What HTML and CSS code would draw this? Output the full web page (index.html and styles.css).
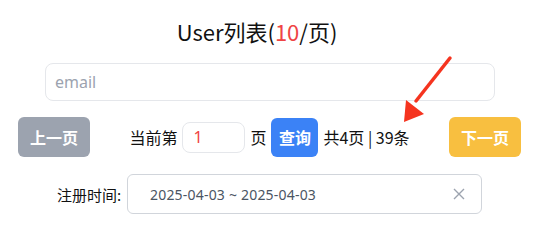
FILE: index.html
```html
<!DOCTYPE html>
<html lang="zh-CN">
<head>
    <meta charset="UTF-8">
    <meta name="viewport" content="width=device-width, initial-scale=1.0">
    <title>User列表</title>
    <link rel="stylesheet" href="styles.css">
</head>
<body>
    <div class="page">
        <h1 class="title">User列表(<span class="red">10</span>/页)</h1>

        <div class="search-row">
            <input class="email" type="text" placeholder="email">
        </div>

        <div class="pager">
            <button class="btn btn-prev">上一页</button>
            <div class="pager-mid">
                <span>当前第</span>
                <input class="page-input" type="text" value="1">
                <span>页</span>
                <button class="btn btn-query">查询</button>
                <span>共4页 | 39条</span>
            </div>
            <button class="btn btn-next">下一页</button>
        </div>

        <div class="date-row">
            <label class="date-label">注册时间:</label>
            <div class="date-box">
                <span class="date-text">2025-04-03 ~ 2025-04-03</span>
                <svg class="clear" width="14" height="14" viewBox="0 0 14 14">
                    <path d="M2 2 L12 12 M12 2 L2 12" stroke="#9ca3af" stroke-width="1.4" fill="none"/>
                </svg>
            </div>
        </div>

        <svg class="arrow" width="60" height="72" viewBox="0 0 60 72">
            <path d="M52 4 L18 47" stroke="#f5341f" stroke-width="3.5" stroke-linecap="round" fill="none"/>
            <polygon points="6,68 8,46 26,60" fill="#f5341f"/>
        </svg>
    </div>
</body>
</html>
```

FILE: styles.css
```css
* {
    margin: 0;
    padding: 0;
    box-sizing: border-box;
}

body {
    font-family: "Noto Sans", "Noto Sans CJK SC", sans-serif;
    background: #ffffff;
    color: #111111;
    width: 546px;
    height: 234px;
    overflow: hidden;
}

.page {
    position: relative;
    padding-top: 16px;
}

.title {
    font-family: "Noto Sans CJK SC", sans-serif;
    font-size: 22px;
    font-weight: 400;
    text-align: center;
    line-height: 30px;
    color: #111;
    padding-right: 32px;
}

.red {
    color: #ef4444;
}

.search-row {
    margin-top: 17px;
    padding-left: 45px;
}

.email {
    width: 450px;
    height: 38px;
    border: 1px solid #e5e7eb;
    border-radius: 8px;
    padding: 0 9px;
    font-family: "Noto Sans", sans-serif;
    font-size: 16px;
    outline: none;
}

.email::placeholder {
    color: #9ca3af;
}

.pager {
    margin-top: 16px;
    display: flex;
    align-items: center;
    justify-content: space-between;
    padding: 0 25px 0 18px;
    font-family: "Noto Sans CJK SC", sans-serif;
    font-size: 16px;
}

.pager-mid {
    display: flex;
    align-items: center;
    gap: 5px;
}

.btn {
    border: none;
    color: #ffffff;
    font-family: "Noto Sans CJK SC", sans-serif;
    font-size: 16px;
    font-weight: 700;
    border-radius: 6px;
    cursor: pointer;
}

.btn-prev {
    width: 72px;
    height: 40px;
    background: #9ca3af;
}

.btn-next {
    width: 72px;
    height: 40px;
    background: #f8bf40;
}

.btn-query {
    width: 47px;
    height: 39px;
    background: #3b82f6;
}

.page-input {
    width: 63px;
    height: 31px;
    border: 1px solid #e5e7eb;
    border-radius: 8px;
    padding: 0 10px;
    font-family: "Noto Sans", sans-serif;
    font-size: 16px;
    color: #ef4444;
    outline: none;
}

.date-row {
    margin-top: 17px;
    display: flex;
    align-items: center;
    padding-left: 57px;
}

.date-label {
    font-family: "Noto Sans CJK SC", sans-serif;
    font-size: 15px;
    width: 70px;
}

.date-box {
    width: 355px;
    height: 40px;
    border: 1px solid #d1d5db;
    border-radius: 6px;
    display: flex;
    align-items: center;
    justify-content: space-between;
    padding: 0 15px 0 22px;
}

.date-text {
    font-size: 14px;
    color: #4b5563;
    letter-spacing: 0.2px;
}

.arrow {
    position: absolute;
    left: 398px;
    top: 54px;
}
```
